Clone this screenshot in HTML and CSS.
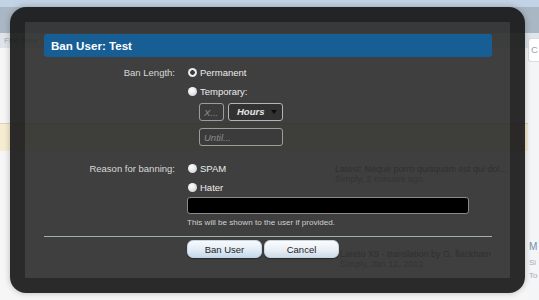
FILE: index.html
```html
<!DOCTYPE html>
<html lang="en">
<head>
    <meta charset="UTF-8">
    <title>Ban User: Test</title>
    <link rel="stylesheet" href="styles.css">
</head>
<body>
    <div class="page">
        <div class="page-top"></div>
        <div class="page-header"></div>
        <div class="page-nav">Find New</div>
        <div class="page-body">
            <div class="main">
                <div class="breadcrumb"></div>
                <div class="notice"></div>
                <div class="thread-row">
                    <div class="thread-last">Latest: Neque porro quisquam est qui dol...</div>
                    <div class="thread-meta">Simply, 2 minutes ago</div>
                </div>
                <div class="thread-row lower">
                    <div class="thread-last">Lareto X9 - translation by G. flackham</div>
                    <div class="thread-meta">Simply, Jan 12, 2012</div>
                </div>
            </div>
            <div class="sidebar">
                <div class="side-box">C</div>
                <div class="side-block">
                    <div class="side-title">M</div>
                    <div class="side-line">Si</div>
                    <div class="side-line">To</div>
                </div>
            </div>
        </div>
    </div>

    <!-- overlay: ban dialog -->
    <div class="overlay">
        <div class="overlay-inner">
            <h2 class="heading">Ban User: Test</h2>

            <div class="ctrl-unit">
                <div class="ctrl-label">Ban Length:</div>
                <div class="ctrl-input">
                    <label class="option"><input type="radio" name="ban_length" checked> Permanent</label>
                    <label class="option"><input type="radio" name="ban_length"> Temporary:</label>
                    <div class="sub-row">
                        <input type="text" class="text-box small" placeholder="X...">
                        <div class="select-box">Hours<span class="arrow"></span></div>
                    </div>
                    <div class="sub-row">
                        <input type="text" class="text-box until" placeholder="Until...">
                    </div>
                </div>
            </div>

            <div class="ctrl-unit reason">
                <div class="ctrl-label">Reason for banning:</div>
                <div class="ctrl-input">
                    <label class="option"><input type="radio" name="reason"> SPAM</label>
                    <label class="option"><input type="radio" name="reason"> Hater</label>
                    <input type="text" class="reason-box">
                    <p class="explain">This will be shown to the user if provided.</p>
                </div>
            </div>

            <div class="submit-unit">
                <div></div>
                <div class="button-group">
                    <button class="button primary">Ban User</button>
                    <button class="button">Cancel</button>
                </div>
            </div>
        </div>
    </div>
</body>
</html>
```

FILE: styles.css
```css
      body {
        margin: 0;
        width: 539px;
        height: 300px;
        overflow: hidden;
        position: relative;
        background: #eceeef;
        font-family: "Liberation Sans", Arial, sans-serif;
        font-size: 9.5px;
      }

      /* page behind the overlay */
      .page-top {
        height: 7px;
        background: #c2d3e5;
      }

      .page-header {
        height: 26px;
        background: #a9b7c5;
      }

      .page-nav {
        height: 15px;
        line-height: 15px;
        background: #dfe4e9;
        color: #9aa7b3;
        padding-left: 4px;
        font-size: 8px;
      }

      .page-body {
        display: flex;
      }

      .main {
        flex: 0 0 528px;
        background: #f6f6f6;
        height: 252px;
      }

      .breadcrumb {
        height: 75px;
      }

      .notice {
        height: 27px;
        background: #f5ecd2;
        border-top: 1px solid #d8d2c0;
      }

      .thread-row {
        padding: 13px 0 0 335px;
        color: #5a5a5a;
        font-size: 9px;
        line-height: 10px;
      }

      .thread-row.lower {
        padding-top: 65px;
        padding-left: 340px;
      }

      .thread-meta {
        color: #8a8a8a;
      }

      .sidebar {
        flex: 0 0 11px;
        background: #f4f5f6;
      }

      .side-box {
        margin-top: -10px;
        height: 22px;
        border: 1px solid #d6dde4;
        border-right: none;
        border-radius: 3px 0 0 3px;
        background: #fff;
        color: #8fa4b8;
        line-height: 22px;
        padding-left: 2px;
      }

      .side-block {
        margin-top: 178px;
        padding-left: 1px;
        line-height: 13px;
        color: #aab;
        font-size: 8px;
      }

      .side-title {
        color: #6d8fb4;
        font-size: 10px;
        margin-bottom: 3px;
      }

      /* overlay dialog */
      .overlay {
        position: absolute;
        left: 10px;
        top: 7px;
        width: 485px;
        height: 256px;
        border: 15px solid rgba(20, 20, 20, 0.9);
        border-radius: 16px;
        box-shadow: 0 0 6px rgba(0,0,0,0.25);
      }

      .overlay-inner {
        height: 100%;
        box-sizing: border-box;
        padding: 12px 18px 0 19px;
        background: rgba(44, 44, 44, 0.91);
        color: #e4e4e4;
      }

      .heading {
        margin: 0;
        height: 23px;
        line-height: 23px;
        padding-left: 7px;
        border-radius: 3px;
        background: #175e95;
        color: #fff;
        font-size: 11.6px;
        font-weight: bold;
      }

      .ctrl-unit,
      .submit-unit {
        display: grid;
        grid-template-columns: 131px 1fr;
        column-gap: 12px;
      }

      .ctrl-unit {
        margin-top: 9px;
      }

      .ctrl-unit.reason {
        margin-top: 16px;
      }

      .ctrl-label {
        text-align: right;
        line-height: 14px;
        color: #d8d8d8;
      }

      .ctrl-input {
        display: flex;
        flex-direction: column;
        align-items: flex-start;
      }

      .option {
        display: flex;
        align-items: center;
        gap: 3px;
        height: 14px;
        line-height: 14px;
        color: #ececec;
      }

      .option + .option {
        margin-top: 5px;
      }

      .option input {
        appearance: none;
        margin: 0 0 1px 1px;
        width: 9px;
        height: 9px;
        border-radius: 50%;
        background: radial-gradient(circle at 40% 35%, #ffffff 0, #e6e6e6 50%, #c4c4c4 100%);
      }

      .option input:checked {
        background: radial-gradient(circle, #3a3a3a 0 2px, #f2f2f2 2.6px, #cfcfcf 100%);
      }

      .sub-row {
        display: flex;
        gap: 4px;
        margin-left: 12px;
        margin-top: 4px;
      }

      .sub-row + .sub-row {
        margin-top: 7px;
      }

      .text-box {
        box-sizing: border-box;
        height: 18px;
        margin: 0;
        padding: 0 4px;
        border: 1px solid #9d9d9d;
        border-radius: 3px;
        background: #3b3b3b;
        color: #ddd;
        font-family: inherit;
        font-size: 9.5px;
      }

      .text-box::placeholder {
        color: #8c8c8c;
        font-style: italic;
      }

      .text-box.small {
        width: 25px;
      }

      .text-box.until {
        width: 84px;
      }

      .select-box {
        box-sizing: border-box;
        position: relative;
        width: 55px;
        height: 18px;
        line-height: 16px;
        padding-left: 8px;
        border: 1px solid #b4b4b4;
        border-radius: 3px;
        background: #323232;
        color: #e6e6e6;
        font-weight: bold;
        font-style: italic;
      }

      .arrow {
        position: absolute;
        right: 5px;
        top: 6px;
        border-left: 3px solid transparent;
        border-right: 3px solid transparent;
        border-top: 4px solid #0c0c0c;
      }

      .reason-box {
        box-sizing: border-box;
        width: 282px;
        height: 17px;
        margin: 2px 0 0 0;
        border: 1px solid #8a8a8a;
        border-radius: 3px;
        background: #000;
      }

      .explain {
        margin: 4px 0 0 0;
        font-size: 8.1px;
        line-height: 10px;
        color: #cfcfcf;
      }

      .submit-unit {
        margin-top: 8px;
        padding-top: 3px;
        border-top: 1px solid #a3b1ae;
      }

      .button-group {
        display: flex;
        gap: 2px;
      }

      .button {
        width: 75px;
        height: 18px;
        padding: 0;
        border: 1px solid #c9d6e2;
        border-radius: 6px;
        background: linear-gradient(#fbfcfd, #e9eff5 55%, #cddcea);
        color: #1c1c1c;
        font-family: inherit;
        font-size: 9.5px;
        box-shadow: 0 1px 1px rgba(0,0,0,0.35);
      }

      .button.primary {
        background: linear-gradient(#f7fafd, #e2ecf6 55%, #c4d8ec);
      }
```
